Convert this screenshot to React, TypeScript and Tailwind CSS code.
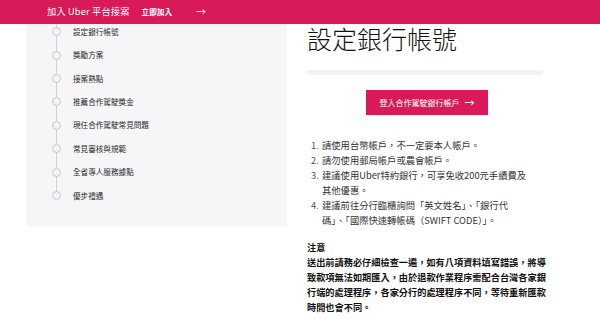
import React from "react";

const navItems = [
  "設定銀行帳號",
  "獎勵方案",
  "接案熱點",
  "推薦合作駕駛獎金",
  "現任合作駕駛常見問題",
  "常見審核與規範",
  "全省專人服務據點",
  "優步禮遇",
];

const font = { fontFamily: '"Noto Sans CJK TC", "Noto Sans", sans-serif' };

export default function App() {
  return (
    <div className="w-[600px] h-[336px] overflow-hidden bg-white text-[#222]" style={font}>
      {/* Header */}
      <div className="h-[24px] bg-[#d81b58] flex items-center pl-[47px] text-white">
        <span className="text-[9.2px] leading-none tracking-[0.2px]">加入 Uber 平台接案</span>
        <span className="ml-[12px] text-[7.6px] font-bold leading-none">立即加入</span>
        <span className="ml-[24px] text-[10px] leading-none">→</span>
      </div>

      {/* Body */}
      <div className="flex pl-[26px]">
        {/* Sidebar */}
        <div className="w-[261px] h-[202px] bg-[#f6f6f8] shrink-0 overflow-hidden">
          <div className="pl-[26px] -mt-[4px]">
            {navItems.map((item, i) => (
              <div key={item} className="h-[23.4px] flex items-center">
                <div className="relative w-[9px] h-full flex items-center justify-center">
                  <div
                    className={
                      i === navItems.length - 1
                        ? "absolute left-[4px] top-0 h-1/2 w-px bg-[#d0d0d4]"
                        : "absolute left-[4px] top-0 bottom-0 w-px bg-[#d0d0d4]"
                    }
                  />
                  <div className="relative w-[9px] h-[9px] rounded-full border-[1.5px] border-[#c9c9cd] bg-[#f3f3f5]" />
                </div>
                <span className="ml-[12px] text-[7.6px] leading-none text-[#2a2a2a]">{item}</span>
              </div>
            ))}
          </div>
        </div>

        {/* Main column */}
        <div className="ml-[20px] w-[240px] shrink-0">
          <h1 className="mt-[2px] text-[25px] leading-[25px] font-light text-[#111]">
            設定銀行帳號
          </h1>
          <div className="mt-[19px] w-[236px] h-[5px] bg-[#f3f3f4]" />
          <div className="mt-[15px] flex justify-center">
            <button className="w-[122px] h-[25px] bg-[#d81b58] text-white text-[8px] flex items-center justify-center gap-[5px]">
              <span className="leading-none">登入合作駕駛銀行帳戶</span>
              <span className="text-[10px] leading-none">→</span>
            </button>
          </div>

          <div className="mt-[23px] pl-[4px] text-[9.3px] leading-[15px] text-[#333]">
            <div className="flex">
              <span className="w-[11px] shrink-0 text-[#555]">1.</span>
              <span>請使用台幣帳戶，不一定要本人帳戶。</span>
            </div>
            <div className="flex">
              <span className="w-[11px] shrink-0 text-[#555]">2.</span>
              <span>請勿使用郵局帳戶或農會帳戶。</span>
            </div>
            <div className="flex">
              <span className="w-[11px] shrink-0 text-[#555]">3.</span>
              <span>
                建議使用Uber特約銀行，可享免收200元手續費及
                <br />
                其他優惠。
              </span>
            </div>
            <div className="flex">
              <span className="w-[11px] shrink-0 text-[#555]">4.</span>
              <span>
                建議前往分行臨櫃詢問「英文姓名」、「銀行代
                <br />
                碼」、「國際快速轉帳碼（SWIFT CODE）」。
              </span>
            </div>
          </div>

          <div className="mt-[12px] text-[9.2px] leading-[15px] font-bold text-[#111]">
            <div>注意</div>
            <div>
              送出前請務必仔細檢查一遍，如有八項資料填寫錯誤，將導
              <br />
              致款項無法如期匯入，由於退款作業程序需配合台灣各家銀
              <br />
              行端的處理程序，各家分行的處理程序不同，等待重新匯款
              <br />
              時間也會不同。
            </div>
          </div>
        </div>
      </div>
    </div>
  );
}
